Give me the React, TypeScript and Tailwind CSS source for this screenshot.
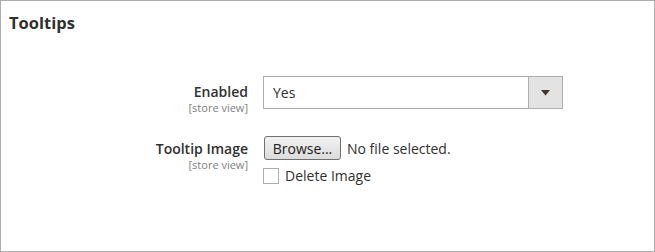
import React from "react";

export default function App() {
  return (
    <div className="w-[655px] h-[252px] bg-white border border-[#adadad] box-border font-['Open_Sans',sans-serif] text-[#303030]">
      <div className="pl-[8px] pt-[11px] text-[16.5px] font-bold leading-[22px] text-[#303030]">Tooltips</div>
      <div className="mt-[42px] flex flex-col gap-[22px]">
        <div className="flex">
          <div className="w-[247px] flex flex-col items-end pt-[7px]">
            <span className="text-[14px] font-semibold leading-[17px] text-[#303030]">Enabled</span>
            <span className="mt-[1px] text-[11px] leading-[13px] text-[#808080]">[store view]</span>
          </div>
          <div className="ml-[15px] w-[300px] h-[33px] border border-[#adadad] flex items-stretch">
            <div className="flex-1 flex items-center pl-[9px] text-[14px]">Yes</div>
            <div className="w-[34px] bg-[#e3e3e3] border-l border-[#adadad] flex items-center justify-center">
              <svg width="9" height="6" viewBox="0 0 9 6"><path d="M0 0H9L4.5 5.5Z" fill="#41362f" /></svg>
            </div>
          </div>
        </div>
        <div className="flex">
          <div className="w-[247px] flex flex-col items-end pt-[4px]">
            <span className="text-[14px] font-semibold leading-[17px] text-[#303030]">Tooltip Image</span>
            <span className="mt-[1px] text-[11px] leading-[13px] text-[#808080]">[store view]</span>
          </div>
          <div className="ml-[16px] flex flex-col">
            <div className="flex items-center h-[24px]">
              <div className="w-[77px] h-[24px] rounded-[3px] border border-[#707070] bg-gradient-to-b from-[#f2f2f2] to-[#dcdcdc] flex items-center justify-center text-[14px] text-[#1a1a1a]">Browse...</div>
              <span className="ml-[6px] text-[14px] text-[#303030]">No file selected.</span>
            </div>
            <div className="flex items-center mt-[5px] -ml-[1px]">
              <div className="w-[16px] h-[16px] border border-[#adadad] bg-white"></div>
              <span className="ml-[6px] text-[14px] text-[#303030]">Delete Image</span>
            </div>
          </div>
        </div>
      </div>
    </div>
  );
}
